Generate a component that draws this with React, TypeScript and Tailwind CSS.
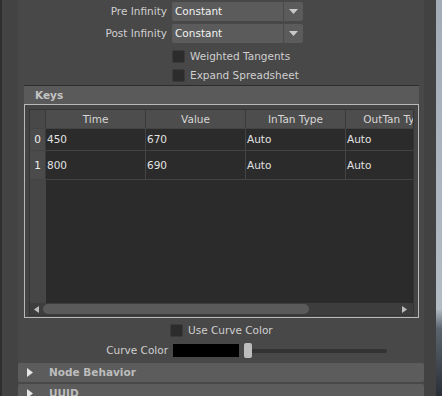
const font = { fontFamily: '"DejaVu Sans", "Liberation Sans", sans-serif' }

function Dropdown({ value }: { value: string }) {
  return (
    <div className="w-[131px] h-[19px] flex bg-[#5b5b5b] rounded-[2px]">
      <div className="flex-1 flex items-center pl-[3px] text-[#f2f2f2]">{value}</div>
      <div className="w-[1px] bg-[#4a4a4a]" />
      <div className="w-[19px] flex items-center justify-center">
        <svg width="9" height="5" viewBox="0 0 9 5">
          <path d="M0 0 L9 0 L4.5 5 Z" fill="#c9c9c9" />
        </svg>
      </div>
    </div>
  )
}

function Check({ label }: { label: string }) {
  return (
    <div className="flex items-center h-[13px]">
      <div className="w-[13px] h-[13px] rounded-[2px] bg-[#2c2c2c] border border-[#3a3a3a]" />
      <span className="ml-[5px] text-[#cfcfcf]">{label}</span>
    </div>
  )
}

function Section({ title }: { title: string }) {
  return (
    <div className="h-[19px] shrink-0 flex items-center bg-[#5c5c5c] rounded-[2px] pl-[9px]">
      <svg width="6" height="9" viewBox="0 0 6 9">
        <path d="M0 0 L6 4.5 L0 9 Z" fill="#e6e6e6" />
      </svg>
      <span className="ml-[16px] font-bold text-[#bdbdbd]">{title}</span>
    </div>
  )
}

const cols = ['Time', 'Value', 'InTan Type', 'OutTan Type']
const rows = [
  { h: 'h-[22px]', v: ['450', '670', 'Auto', 'Auto'] },
  { h: 'h-[29px]', v: ['800', '690', 'Auto', 'Auto'] },
]

export default function App() {
  return (
    <div className="w-[442px] h-[396px] overflow-hidden flex bg-[#444] text-[10.5px] leading-none" style={font}>
      {/* left margin */}
      <div className="w-[18px] shrink-0 bg-[#434343] border-l-2 border-[#2e2e2e]" />

      {/* attribute panel */}
      <div className="w-[406px] shrink-0 flex flex-col bg-[#484848] pt-[2px]">
        <div className="flex items-center">
          <div className="w-[154px] pr-[5px] text-right text-[#cfcfcf]">Pre Infinity</div>
          <Dropdown value="Constant" />
        </div>
        <div className="flex items-center mt-[3px]">
          <div className="w-[154px] pr-[5px] text-right text-[#cfcfcf]">Post Infinity</div>
          <Dropdown value="Constant" />
        </div>
        <div className="ml-[154px] mt-[7px]">
          <Check label="Weighted Tangents" />
        </div>
        <div className="ml-[154px] mt-[6px]">
          <Check label="Expand Spreadsheet" />
        </div>

        {/* Keys frame */}
        <div className="ml-[6px] mr-[5px] mt-[3px]">
          <div className="h-[19px] flex items-center bg-[#5a5a5a] border-t border-[#2c2c2c] pl-[11px] font-bold text-[#c4c4c4]">
            Keys
          </div>
          <div className="border border-[#b9b9b9] bg-[#444] px-[4px] pt-[4px] pb-[1px]">
            <div className="border border-[#343434] h-[207px] flex flex-col overflow-hidden">
              {/* header */}
              <div className="h-[18px] flex shrink-0 bg-[#4d4d4d] text-[#d6d6d6]">
                <div className="w-[16px] shrink-0 bg-[#484848] border-r border-[#3a3a3a]" />
                {cols.map(c => (
                  <div key={c} className="w-[100px] shrink-0 flex items-center justify-center border-r border-[#3a3a3a] whitespace-nowrap">
                    {c}
                  </div>
                ))}
              </div>
              {rows.map((r, i) => (
                <div key={i} className={`${r.h} flex shrink-0 bg-[#2b2b2b] border-t border-[#444] text-[#e2e2e2]`}>
                  <div className="w-[16px] shrink-0 bg-[#4b4b4b] flex items-center justify-center text-[#f0f0f0] border-r border-[#3a3a3a]">
                    {i}
                  </div>
                  {r.v.map((v, j) => (
                    <div key={j} className="w-[100px] shrink-0 flex items-center pl-[1px] border-r border-[#444]">
                      {v}
                    </div>
                  ))}
                </div>
              ))}
              <div className="flex-1 flex bg-[#2b2b2b] border-t border-[#444]">
                <div className="w-[16px] bg-[#464646]" />
              </div>
              {/* horizontal scrollbar */}
              <div className="h-[12px] shrink-0 flex items-center bg-[#3d3d3d]">
                <div className="w-[13px] flex justify-center">
                  <svg width="5" height="7" viewBox="0 0 5 7">
                    <path d="M5 0 L0 3.5 L5 7 Z" fill="#bdbdbd" />
                  </svg>
                </div>
                <div className="w-[266px] h-[10px] rounded-full bg-[#5a5a5a]" />
                <div className="flex-1" />
                <div className="w-[10px] mr-[4px] flex justify-center">
                  <svg width="5" height="7" viewBox="0 0 5 7">
                    <path d="M0 0 L5 3.5 L0 7 Z" fill="#bdbdbd" />
                  </svg>
                </div>
              </div>
            </div>
          </div>
        </div>

        <div className="ml-[152px] mt-[6px]">
          <Check label="Use Curve Color" />
        </div>

        <div className="flex items-center mt-[6px] h-[15px]">
          <div className="w-[155px] pr-[5px] text-right text-[#cfcfcf]">Curve Color</div>
          <div className="w-[66px] h-[13px] bg-black" />
          <div className="ml-[5px] w-[143px] relative flex items-center h-[15px]">
            <div className="w-full h-[4px] rounded-full bg-[#333]" />
            <div className="absolute left-0 top-0 w-[8px] h-[15px] rounded-[2px] bg-[#bdbdbd]" />
          </div>
        </div>

        <div className="mt-[5px] flex flex-col gap-[2px]">
          <Section title="Node Behavior" />
          <Section title="UUID" />
        </div>
      </div>

      {/* right scroll strip */}
      <div className="w-[12px] shrink-0 bg-[#424242]" />
      {/* desktop behind */}
      <div className="w-[6px] shrink-0 bg-[linear-gradient(180deg,#a2acb7_0%,#b3bbc5_78%,#5b646e_83%,#2a2f36_100%)]" />
    </div>
  )
}
